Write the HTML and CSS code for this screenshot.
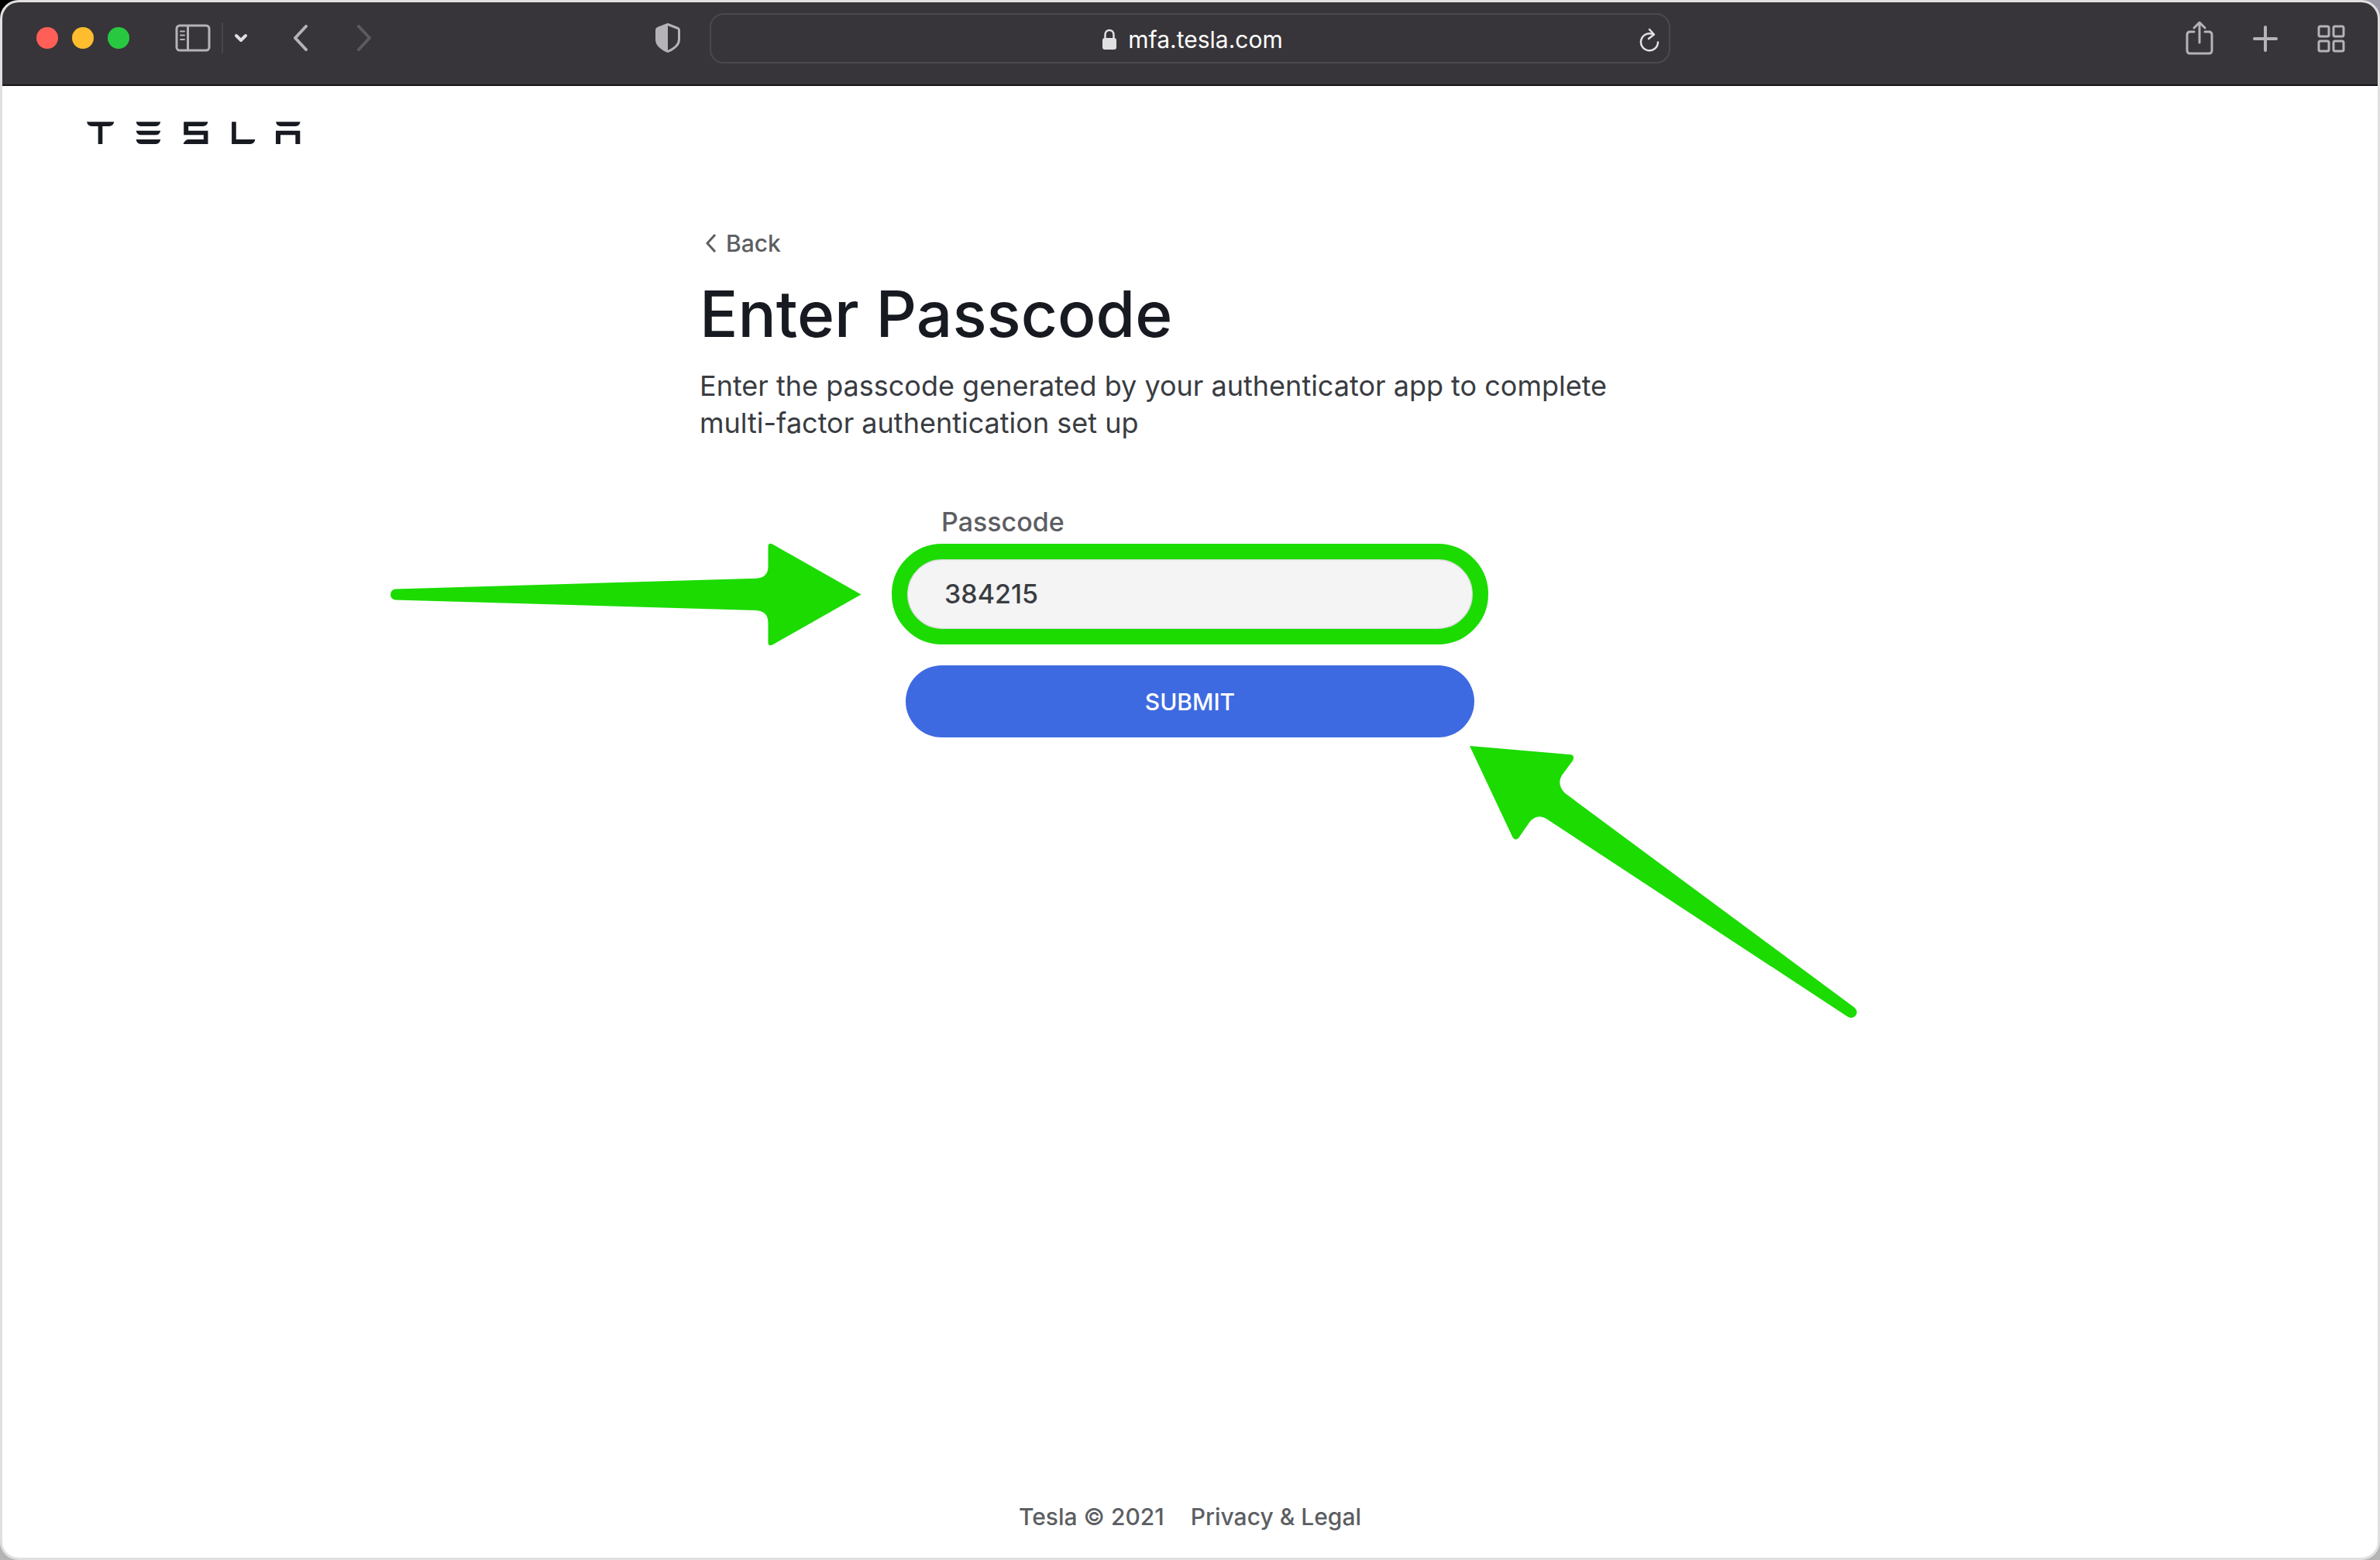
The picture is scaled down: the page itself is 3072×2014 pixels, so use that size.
FILE: index.html
```html
<!DOCTYPE html>
<html lang="en">
<head>
<meta charset="utf-8">
<meta name="viewport" content="width=device-width, initial-scale=1">
<title>Enter Passcode</title>
<link rel="stylesheet" href="styles.css">
</head>
<body>
<div class="window">
  <div class="toolbar">
    <div class="tools tools-left">
      <div class="lights"><span class="light red"></span><span class="light yellow"></span><span class="light green"></span></div>
      <div class="sidebar-tools">
        <button class="tool" aria-label="Sidebar"><svg width="46" height="36" viewBox="0 0 46 36" fill="none" stroke="#b5b2b8" stroke-width="3"><rect x="2" y="2" width="42" height="32" rx="4"/><path d="M16.500 2V34"/><path d="M7 9.500H12M7 14.500H12M7 20H12" stroke-width="2" stroke-linecap="round"/></svg></button>
        <span class="divider"></span>
        <button class="tool" aria-label="Tab groups"><svg width="18" height="12" viewBox="0 0 18 12" fill="none" stroke="#e0dfe1" stroke-width="4" stroke-linecap="round" stroke-linejoin="round"><path d="M3 3L9 9L15 3"/></svg></button>
      </div>
      <div class="history">
        <button class="tool" aria-label="Go back"><svg width="20" height="34" viewBox="0 0 20 34" fill="none" stroke="#b5b2b8" stroke-width="4" stroke-linecap="round" stroke-linejoin="round"><path d="M17 2L3 17L17 32"/></svg></button>
        <button class="tool" aria-label="Go forward"><svg width="20" height="34" viewBox="0 0 20 34" fill="none" stroke="#5c5a5f" stroke-width="4" stroke-linecap="round" stroke-linejoin="round"><path d="M3 2L17 17L3 32"/></svg></button>
      </div>
      <button class="tool shield" aria-label="Privacy report"><svg width="32" height="38" viewBox="0 0 32 38"><path d="M16 1.500L29 6.500Q30.500 7 30.500 9V21C30.500 28 24 33 16 36.500C8 33 1.500 28 1.500 21V9Q1.500 7 3 6.500Z" fill="none" stroke="#b5b2b8" stroke-width="3" stroke-linejoin="round"/><path d="M16 1V37C8 33 1 28 1 21V8L3 6Z" fill="#b5b2b8"/></svg></button>
    </div>
    <div class="address">
      <span class="site"><svg width="20" height="28" viewBox="0 0 20 28"><path d="M4.500 13V8C4.500 0 15.500 0 15.500 8V13" fill="none" stroke="#e0dfe1" stroke-width="2.500"/><rect x="1" y="12" width="18" height="15" rx="3" fill="#e0dfe1"/></svg><span>mfa.tesla.com</span></span>
      <button class="tool reload" aria-label="Reload"><svg width="26" height="32" viewBox="0 0 26 32" fill="none" stroke="#e0dfe1" stroke-width="2.500" stroke-linecap="round" stroke-linejoin="round"><path d="M18 9.500A11 11 0 1 0 24 19.500"/><path d="M13 3L19 9.500L12 15"/></svg></button>
    </div>
    <div class="tools tools-right">
      <button class="tool" aria-label="Share"><svg width="36" height="44" viewBox="0 0 36 44" fill="none" stroke="#b5b2b8" stroke-width="3" stroke-linecap="round" stroke-linejoin="round"><path d="M11 14H6Q2 14 2 18V38Q2 42 6 42H30Q34 42 34 38V18Q34 14 30 14H25"/><path d="M18 28V2M11 9L18 2L25 9"/></svg></button>
      <button class="tool" aria-label="New tab"><svg width="32" height="44" viewBox="0 0 32 44" fill="none" stroke="#b5b2b8" stroke-width="4" stroke-linecap="round"><path d="M16 8V38M2 23H30"/></svg></button>
      <button class="tool" aria-label="Tab overview"><svg width="36" height="44" viewBox="0 0 36 44" fill="none" stroke="#b5b2b8" stroke-width="3"><rect x="2" y="7" width="13" height="13" rx="2"/><rect x="21" y="7" width="13" height="13" rx="2"/><rect x="2" y="26" width="13" height="13" rx="2"/><rect x="21" y="26" width="13" height="13" rx="2"/></svg></button>
    </div>
  </div>

  <header class="site-header">
    <svg class="logo" role="img" aria-label="Tesla" width="276" height="29" viewBox="335 472 829 87" fill="#171a20"><path d="M335 473H441Q437 490 422 490H396V559H379V490H354Q339 490 335 473Z"/><path d="M526 473H621Q617 490 603 490H544Q530 490 526 473ZM526 507H621Q617 524 603 524H544Q530 524 526 507ZM526 541H621Q617 559 603 559H544Q530 559 526 541Z"/><path d="M711 473H805Q801 490 786 490H729V507H805V559H709Q716 541 731 541H788V524H711Z"/><path d="M897 473H914V541H988Q984 559 969 559H897Z"/><path d="M1068 473H1163Q1159 490 1145 490H1086Q1072 490 1068 473ZM1068 507H1162V559H1144V524H1086V559H1068Z"/></svg>
  </header>

  <main class="content">
    <a class="back" href="#"><svg width="14" height="24" viewBox="0 0 14 24" fill="none" stroke="#5c5e62" stroke-width="3"><path d="M12 1L2 12L12 23"/></svg>Back</a>
    <h1 class="title">Enter Passcode</h1>
    <p class="intro">Enter the passcode generated by your authenticator app to complete multi-factor authentication set up</p>
    <form class="form">
      <label class="label" for="passcode">Passcode</label>
      <input class="passcode" id="passcode" type="text" value="384215">
      <button class="submit" type="button">SUBMIT</button>
      <svg class="arrow arrow-right" width="610" height="134" viewBox="503 701 610 134" fill="#1bdb00" aria-hidden="true"><path d="M510 760.500L976 746.700Q991.500 746 991.500 731V705Q992 700 997 702.500L1111.500 767.500L997 832.500Q992 835 991.500 830V804Q991.500 789 976 788L510 774.500Q504 773 504 767.500Q504 762 510 760.500Z"/></svg>
      <svg class="arrow arrow-left" width="502" height="354" viewBox="1896 962 502 354" fill="#1bdb00" aria-hidden="true"><path d="M1897 963L2028 974.300Q2033 976 2030 982L2016 1001Q2009 1013 2020 1024L2394 1301Q2398 1305 2396 1310Q2391 1317 2384 1312L1996 1057Q1984 1050 1974.500 1061L1960 1082Q1956 1086 1952.500 1081Z"/></svg>
    </form>
  </main>

  <footer class="footer"><span>Tesla © 2021</span><a href="#">Privacy &amp; Legal</a></footer>
</div>
</body>
</html>
```
FILE: styles.css
```css
* { box-sizing: border-box; }
body {
  margin: 0;
  background: linear-gradient(to right, #000 50%, #9c99a6 50%) top / 100% 50% no-repeat, #b4b4b4;
  font-family: Inter, "Liberation Sans", sans-serif;
  font-weight: 500;
  font-size: 30px;
  line-height: 40px;
  color: #5c5e62;
}
svg { display: block; flex: none; }
a { color: inherit; text-decoration: none; }
button { border: 0; padding: 0; background: none; font: inherit; color: inherit; cursor: pointer; }

.window {
  display: flex;
  flex-direction: column;
  min-height: 100vh;
  border: 3px solid #e0e0e0;
  border-radius: 24px;
  background: #fff;
  overflow: hidden;
}

/* Browser toolbar */
.toolbar {
  display: grid;
  grid-template-columns: 1fr minmax(0, 1240px) 1fr;
  align-items: start;
  height: 108px;
  padding-top: 14px;
  background: #373539;
  border-bottom: 2px solid #161517;
}
.tools { display: flex; align-items: center; height: 64px; }
.tools-left { padding: 0 38px 0 44px; }
.tools-right { justify-content: flex-end; gap: 51px; padding-right: 42px; }
.lights { display: flex; gap: 18px; }
.light { width: 28px; height: 28px; border-radius: 50%; }
.red { background: #ff5f57; }
.yellow { background: #febc2e; }
.green { background: #28c840; }
.sidebar-tools { display: flex; align-items: center; gap: 14px; margin-left: 59px; }
.divider { width: 2px; height: 40px; background: #48464a; }
.history { display: flex; gap: 62px; margin-left: 58px; }
.shield { margin-left: auto; }
.address {
  display: flex;
  align-items: center;
  height: 65px;
  border: 2px solid #4b494d;
  border-radius: 18px;
  padding: 2px 12px 0 14px;
  color: #fff;
  font-weight: 400;
}
.site { flex: 1; display: flex; justify-content: center; align-items: center; gap: 14px; padding-left: 30px; }

/* Page */
.site-header { padding: 46px 109px 0; }
.content { flex: 1; width: 1266px; max-width: 100%; margin: 0 auto; padding-top: 108px; }
.back { display: inline-flex; align-items: center; gap: 12px; padding-left: 8px; vertical-align: top; }
.title { margin: 24px 0 20px; font-size: 82px; line-height: 96px; font-weight: 500; color: #171a20; }
.intro { max-width: 1240px; margin: 0; font-size: 36px; line-height: 48px; font-weight: 400; color: #393c41; }
.form {
  position: relative;
  display: flex;
  flex-direction: column;
  align-items: stretch;
  width: 770px;
  max-width: 100%;
  margin: 84px auto 0;
}
.label { padding-left: 64px; font-size: 34px; }
.passcode {
  height: 130px;
  margin-top: 8px;
  padding: 0 48px 2px;
  border: 20px solid #1bdb00;
  border-radius: 65px;
  background: #f4f4f4;
  box-shadow: inset 0 0 2px #8e8e8e;
  font: inherit;
  font-size: 34px;
  color: #393c41;
  outline: 0;
}
.submit {
  height: 93px;
  margin: 27px 18px 0;
  border-radius: 47px;
  background: #3e6ae1;
  color: #fff;
}
.arrow { position: absolute; }
.arrow-right { right: calc(100% + 38px); top: 47px; }
.arrow-left { left: calc(100% - 25px); top: 308px; }
.footer { display: flex; justify-content: center; gap: 34px; padding-bottom: 33px; }
```
